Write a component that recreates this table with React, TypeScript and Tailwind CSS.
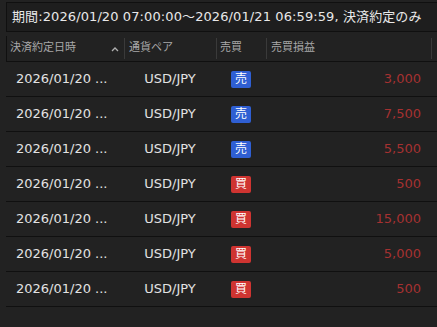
import React from 'react';

type Trade = {
    date: string;
    pair: string;
    side: 'sell' | 'buy';
    pnl: string;
};

const trades: Trade[] = [
    { date: '2026/01/20 ...', pair: 'USD/JPY', side: 'sell', pnl: '3,000' },
    { date: '2026/01/20 ...', pair: 'USD/JPY', side: 'sell', pnl: '7,500' },
    { date: '2026/01/20 ...', pair: 'USD/JPY', side: 'sell', pnl: '5,500' },
    { date: '2026/01/20 ...', pair: 'USD/JPY', side: 'buy', pnl: '500' },
    { date: '2026/01/20 ...', pair: 'USD/JPY', side: 'buy', pnl: '15,000' },
    { date: '2026/01/20 ...', pair: 'USD/JPY', side: 'buy', pnl: '5,000' },
    { date: '2026/01/20 ...', pair: 'USD/JPY', side: 'buy', pnl: '500' },
];

const SideBadge: React.FC<{ side: Trade['side'] }> = ({ side }) => (
    <span
        className={
            side === 'sell'
                ? 'w-[20px] h-[17px] rounded-[2px] bg-[#2f5fd3] text-white text-[12px] leading-none flex items-center justify-center'
                : 'w-[20px] h-[17px] rounded-[2px] bg-[#cf3431] text-white text-[12px] leading-none flex items-center justify-center'
        }>
        {side === 'sell' ? '売' : '買'}
    </span>
);

const App: React.FC = () => {
    return (
        <div className="w-[437px] h-[327px] bg-[#222222] overflow-hidden font-['DejaVu_Sans','Noto_Sans_CJK_JP',sans-serif]">
            {/* Period filter */}
            <div className="pt-[2px] pl-[6px]">
                <div className="w-[460px] h-[30px] border border-[#101010] bg-[#1e1e1e] flex items-center pl-[5px] text-[13px] tracking-[0.1px] text-[#e8e8e8] whitespace-nowrap">
                    期間:2026/01/20 07:00:00～2026/01/21 06:59:59, 決済約定のみ
                </div>
            </div>

            {/* Header */}
            <div className="mt-[4px] ml-[6px] h-[26px] flex border-l border-b border-[#101010] text-[11px] text-[#a8a8a8]">
                <div className="w-[118px] flex items-center justify-between pl-[3px] pr-[5px] border-r border-[#3a3a3a] my-[2px]">
                    <span>決済約定日時</span>
                    <svg width="8" height="6" viewBox="0 0 8 6" fill="none">
                        <path d="M1 5 L4 2 L7 5" stroke="#b0b0b0" strokeWidth="1.3" />
                    </svg>
                </div>
                <div className="w-[92px] flex items-center pl-[4px] border-r border-[#3a3a3a] my-[2px]">通貨ペア</div>
                <div className="w-[50px] flex items-center pl-[3px] border-r border-[#3a3a3a] my-[2px]">売買</div>
                <div className="w-[165px] flex items-center pl-[4px] border-r border-[#3a3a3a] my-[2px]">売買損益</div>
            </div>

            {/* Rows */}
            <div className="ml-[6px]">
                {trades.map((t, i) => (
                    <div key={i} className="h-[35px] flex items-center border-b border-[#101010] text-[13px]">
                        <div className="w-[118px] pl-[10px] text-[#e2e2e2] whitespace-nowrap">{t.date}</div>
                        <div className="w-[92px] text-center text-[#e2e2e2]">{t.pair}</div>
                        <div className="w-[50px] flex justify-center">
                            <SideBadge side={t.side} />
                        </div>
                        <div className="w-[165px] pr-[10px] text-right text-[#a53131]">{t.pnl}</div>
                    </div>
                ))}
            </div>
        </div>
    );
};

export default App;
